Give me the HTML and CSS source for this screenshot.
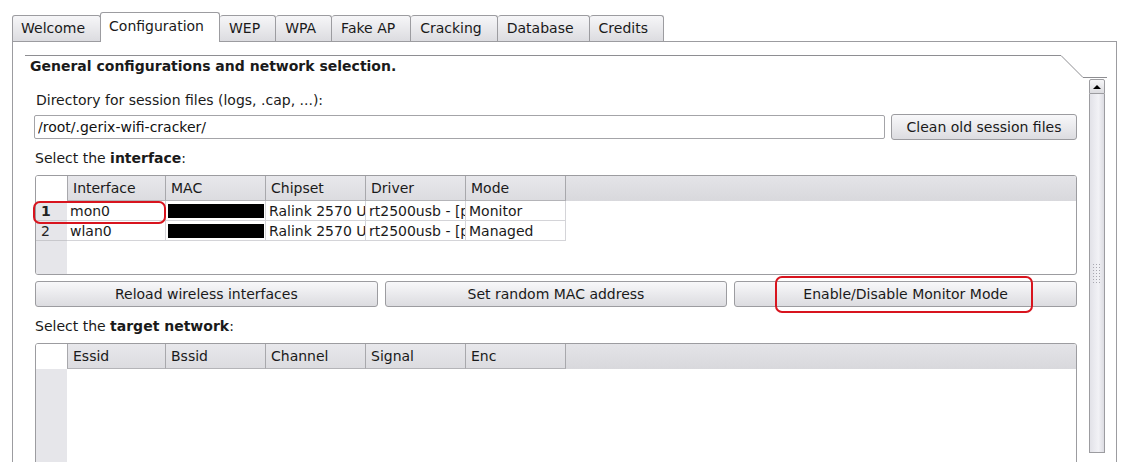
FILE: index.html
```html
<!DOCTYPE html>
<html>
  <head>
    <title>Gerix Wifi Cracker</title>
    <link rel="stylesheet" href="styles.css">
  </head>
  <body>
    <div class="tabs">
      <div class="tab">Welcome</div>
      <div class="tab active">Configuration</div>
      <div class="tab">WEP</div>
      <div class="tab">WPA</div>
      <div class="tab">Fake AP</div>
      <div class="tab">Cracking</div>
      <div class="tab">Database</div>
      <div class="tab">Credits</div>
    </div>

    <div class="panel">
      <svg class="frame-line" width="1082" height="24">
        <polyline points="0,0.5 1036,0.5 1058,22.5 1082,22.5" fill="none" stroke="#8e8e92" stroke-width="1"/>
      </svg>

      <div class="page">
        <div class="title">General configurations and network selection.</div>

        <label class="caption dir">Directory for session files (logs, .cap, ...):</label>
        <div class="line">
          <input class="path" type="text" value="/root/.gerix-wifi-cracker/">
          <button class="btn clean">Clean old session files</button>
        </div>

        <label class="caption">Select the <b>interface</b>:</label>
        <div class="table iface">
          <div class="corner"></div>
          <div class="head">
            <div class="hcell">Interface</div>
            <div class="hcell">MAC</div>
            <div class="hcell">Chipset</div>
            <div class="hcell">Driver</div>
            <div class="hcell">Mode</div>
          </div>
          <div class="rowheads">
            <div class="rh current">1</div>
            <div class="rh">2</div>
          </div>
          <div class="cells">
            <div class="row">
              <div class="cell">mon0</div>
              <div class="cell"><span class="masked"></span></div>
              <div class="cell">Ralink 2570 USB</div>
              <div class="cell">rt2500usb - [phy0]</div>
              <div class="cell">Monitor</div>
            </div>
            <div class="row">
              <div class="cell">wlan0</div>
              <div class="cell"><span class="masked"></span></div>
              <div class="cell">Ralink 2570 USB</div>
              <div class="cell">rt2500usb - [phy0]</div>
              <div class="cell">Managed</div>
            </div>
          </div>
        </div>

        <div class="buttons">
          <button class="btn">Reload wireless interfaces</button>
          <button class="btn">Set random MAC address</button>
          <button class="btn">Enable/Disable Monitor Mode</button>
        </div>

        <label class="caption target">Select the <b>target network</b>:</label>
        <div class="table networks">
          <div class="corner"></div>
          <div class="head">
            <div class="hcell">Essid</div>
            <div class="hcell">Bssid</div>
            <div class="hcell">Channel</div>
            <div class="hcell">Signal</div>
            <div class="hcell">Enc</div>
          </div>
          <div class="rowheads"></div>
          <div class="cells"></div>
        </div>
      </div>

      <div class="scrollbar">
        <div class="arrow-up"><span class="tri"></span></div>
        <div class="slider">
          <div class="grip"></div>
        </div>
      </div>
    </div>

    <div class="mark mark-row"></div>
    <div class="mark mark-monitor"></div>
  </body>
</html>
```

FILE: styles.css
```css
body {
  margin: 0;
  background: #ffffff;
  font-family: 'DejaVu Sans', sans-serif;
  font-size: 14px;
  color: #1a1a1a;
  height: 462px;
  overflow: hidden;
  position: relative;
}

/* tab bar */
.tabs {
  display: flex;
  align-items: flex-end;
  margin-left: 12px;
  height: 42px;
  position: relative;
  z-index: 2;
}

.tab {
  height: 25px;
  line-height: 24px;
  padding: 0 15px 0 9px;
  border: 1px solid #9c9ca0;
  border-bottom: none;
  border-left: none;
  border-radius: 3px 3px 0 0;
  background: linear-gradient(#f6f6f8, #dcdce0);
  margin-bottom: 1px;
}

.tab:first-child {
  border-left: 1px solid #9c9ca0;
  padding-left: 8px;
}

.tab.active {
  height: 29px;
  line-height: 26px;
  background: #ffffff;
  border-left: 1px solid #9c9ca0;
  margin-bottom: 0;
  margin-left: -1px;
  padding: 0 15px 0 8px;
}

/* main panel */
.panel {
  position: relative;
  display: flex;
  margin: -1px 12px 0 12px;
  height: 440px;
  border: 1px solid #9c9ca0;
  border-bottom: none;
  padding: 0 11px 0 22px;
}

.frame-line {
  position: absolute;
  left: 12px;
  top: 13px;
}

.page {
  flex: 1;
  display: flex;
  flex-direction: column;
}

.title {
  font-weight: bold;
  margin: 16px 0 0 -5px;
  line-height: 17px;
}

.caption {
  display: block;
  line-height: 17px;
  margin-top: 10px;
}

.caption.dir {
  margin-top: 17px;
  margin-left: 1px;
}

.caption.target {
  margin-top: 11px;
}

.line {
  display: flex;
  align-items: center;
  margin-top: 5px;
  gap: 6px;
}

.path {
  flex: 1;
  height: 24px;
  box-sizing: border-box;
  margin: 0 0 0 -1px;
  border: 1px solid #a4a4a8;
  border-radius: 2px;
  font-family: inherit;
  font-size: 14px;
  padding: 0 3px;
  color: #111;
}

.btn {
  height: 26px;
  border: 1px solid #9c9ca0;
  border-radius: 3px;
  background: linear-gradient(#f8f8fa, #dcdce0);
  font-family: inherit;
  font-size: 14px;
  color: #1a1a1a;
  padding: 0 14px;
}

.clean {
  width: 186px;
  padding: 0;
}

/* tables */
.table {
  display: grid;
  grid-template-columns: 31px 1fr;
  grid-template-rows: 25px 1fr;
  border: 1px solid #9c9ca0;
  border-radius: 3px;
  margin-top: 8px;
  overflow: hidden;
}

.iface {
  height: 98px;
}

.networks {
  margin-top: 8px;
  height: 130px;
}

.corner {
  background: #ffffff;
}

.head {
  display: flex;
  background: linear-gradient(#e4e4e8, #d8d8dc);
}

.hcell {
  width: 99px;
  border: 1px solid #b4b4b8;
  border-top: none;
  border-right-color: #a8a8ac;
  line-height: 24px;
  padding-left: 5px;
  box-sizing: border-box;
  background: linear-gradient(#e8e8ec, #dcdce0);
}

.hcell + .hcell {
  border-left: none;
  width: 100px;
}

.hcell:first-child {
  border-left-color: #a8a8ac;
}

.rowheads {
  background: #e6e6ea;
}

.rh {
  height: 20px;
  line-height: 20px;
  padding-left: 5px;
  border-bottom: 1px solid #c8c8cc;
  box-sizing: border-box;
  color: #222;
}

.rh.current {
  font-weight: bold;
}

.row {
  display: flex;
  height: 20px;
}

.cell {
  width: 100px;
  height: 20px;
  box-sizing: border-box;
  border-right: 1px solid #d4d4d8;
  border-bottom: 1px solid #d4d4d8;
  padding-left: 3px;
  line-height: 20px;
  white-space: nowrap;
  overflow: hidden;
}

.cell:first-child {
  width: 99px;
}

.masked {
  display: block;
  width: 96px;
  height: 14px;
  margin: 3px 0 0 -1px;
  background: #000000;
}

/* button row */
.buttons {
  display: grid;
  grid-template-columns: 1fr 1fr 1fr;
  gap: 7px;
  margin-top: 6px;
}

/* scrollbar */
.scrollbar {
  width: 16px;
  margin-left: 12px;
  margin-top: 37px;
  display: flex;
  flex-direction: column;
}

.arrow-up {
  height: 15px;
  border: 1px solid #9c9ca0;
  border-radius: 2px 2px 0 0;
  background: linear-gradient(#f6f6f8, #dcdce0);
  box-sizing: border-box;
  display: flex;
  align-items: center;
  justify-content: center;
}

.tri {
  width: 0;
  height: 0;
  border-left: 4px solid transparent;
  border-right: 4px solid transparent;
  border-bottom: 4px solid #000;
}

.slider {
  height: 358px;
  border: 1px solid #9c9ca0;
  border-top: none;
  background: linear-gradient(90deg, #e2e2e8, #f2f2f6 60%, #dcdce2);
  display: flex;
  align-items: center;
  justify-content: center;
}

.grip {
  width: 10px;
  height: 20px;
  background-image: radial-gradient(circle, #a8a8b0 0.8px, transparent 1px);
  background-size: 3px 3px;
}

/* red annotation marks drawn over the screenshot */
.mark {
  position: absolute;
  border: 2px solid #d8141e;
  border-radius: 7px;
  z-index: 3;
}

.mark-row {
  left: 33px;
  top: 201px;
  width: 129px;
  height: 19px;
}

.mark-monitor {
  left: 775px;
  top: 276px;
  width: 254px;
  height: 33px;
}
```
